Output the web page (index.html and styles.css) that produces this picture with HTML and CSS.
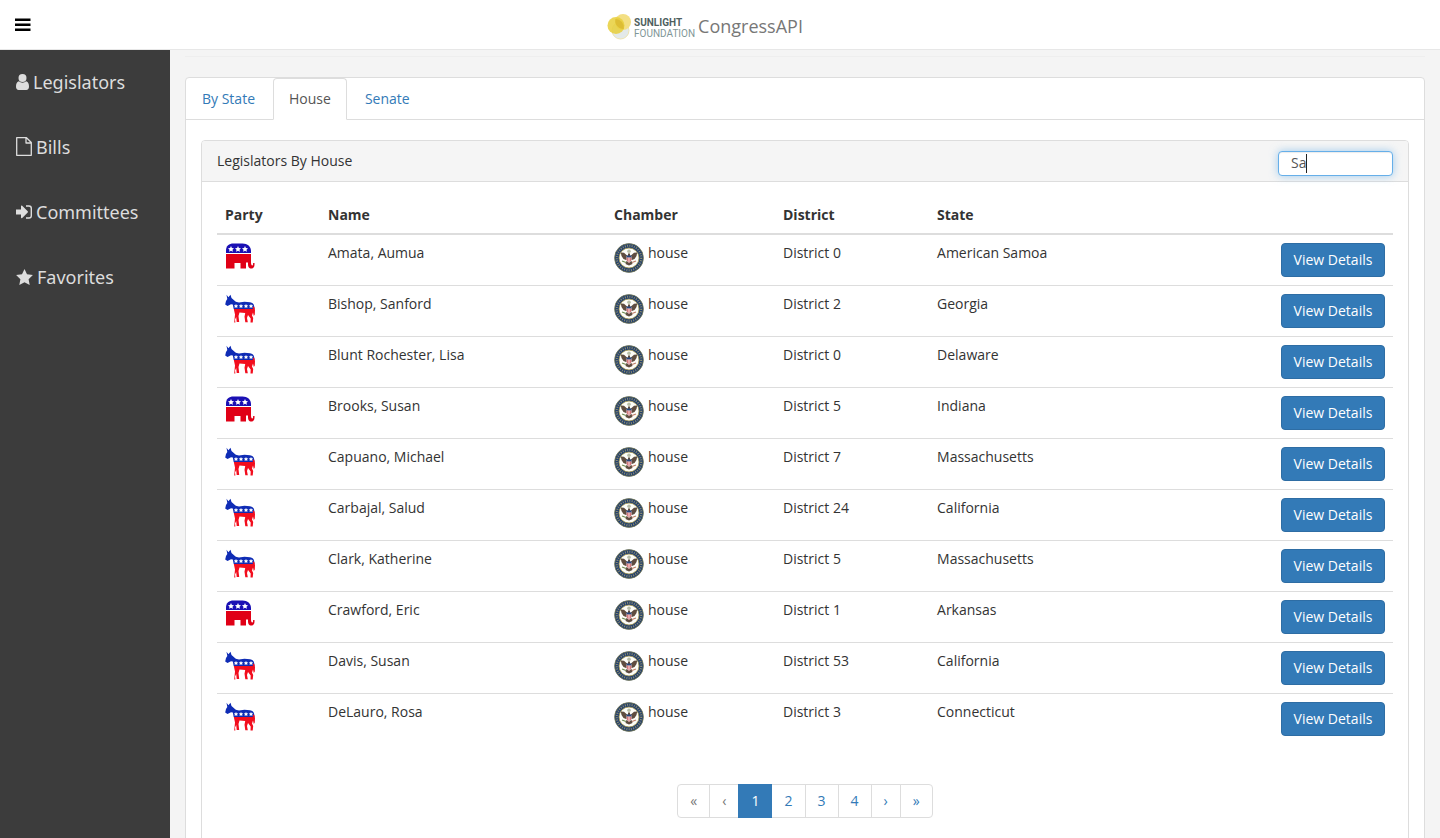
FILE: index.html
```html
<!DOCTYPE html>
<html lang="en">
<head>
<meta charset="utf-8">
<title>CongressAPI</title>
<link rel="stylesheet" href="styles.css">
</head>
<body>
<svg class="sprite" aria-hidden="true">
  <symbol id="elephant" viewBox="0 0 30 30">
    <path fill="#1a10b4" d="M1 10V7.500C1 3 4 .5 8.500 .5h9C22.500 .5 26 3.500 26 8v2z"/>
    <path fill="#e00016" d="M1 11h25v8.500c0 1.500.4 3 1.300 3 .8 0 .8-.8.8-2.500h1.400c.2 3.200-.5 5.500-3 5.500-2.800 0-3.500-2-3.500-4.500v-1.500h-2v6h-5.500V20H9.500v5.500H1z"/>
    <path fill="#fff" d="M6 3l.9 1.900 2.100.3-1.500 1.500.4 2.100L6 7.800l-1.900 1 .4-2.100L3 5.200l2.100-.3zM13 3l.9 1.900 2.100.3-1.500 1.500.4 2.100-1.900-1-1.900 1 .4-2.100L10 5.200l2.100-.3zM20 3l.9 1.900 2.100.3-1.500 1.500.4 2.100-1.900-1-1.900 1 .4-2.100L17 5.200l2.100-.3z"/>
  </symbol>
  <symbol id="donkey" viewBox="0 0 30 30">
    <path fill="#0f2cb5" d="M1.500 .8l1.900 2.500L5.500 .8 6.500 4l4.300 3.700L14 8.500l5.500-.8 5.500.5c2.500.3 4 1.800 4.200 4L29.500 15H8.700L7.800 10.500 6 10.300 2.500 12 .2 10.500 1 7 2.300 5z"/>
    <path fill="#f20d1d" d="M8.800 15h19l.2-2.500 1.300.5.7 3-.2 4.500-1 1.500-.8-3.500-1 3 1.200 2.500-.5 4.500h-2.200l.2-4-2.700-3.500-1 3 .8 4.300h-2.500l-.8-5.500.7-3.800-5.700-.5-1 3.500.7 6h-2.500l-.5-5-1.200 2.500.4 3H9.200l.8-8z"/>
    <path fill="#fff" d="M11 10l.7 1.300 1.500.2-1.100 1 .3 1.500-1.400-.7-1.400.7.3-1.500-1.100-1 1.500-.2zM16 10l.7 1.300 1.500.2-1.100 1 .3 1.500-1.400-.7-1.400.7.3-1.500-1.100-1 1.500-.2zM21 10l.7 1.300 1.500.2-1.100 1 .3 1.500-1.400-.7-1.400.7.3-1.500-1.100-1 1.500-.2zM26 10l.7 1.300 1.500.2-1.100 1 .3 1.500-1.400-.7-1.400.7.3-1.500-1.100-1 1.500-.2z"/>
  </symbol>
  <symbol id="seal" viewBox="0 0 30 30">
    <circle cx="15" cy="15" r="14.400" fill="#24406e" stroke="#77784f" stroke-width=".8"/>
    <circle cx="15" cy="15" r="12.200" fill="none" stroke="#8f8f6e" stroke-width="2" stroke-dasharray="1 1.300"/>
    <circle cx="15" cy="15" r="10" fill="#fdfdf8" stroke="#a99a4d" stroke-width=".8"/>
    <circle cx="15" cy="8.300" r="1.800" fill="#b9bfa8"/>
    <path fill="#5f4d40" d="M6.800 9.500l3.200.3 2.500 2.200 1.500 1v-2.500h2V13l1.500-1L20 9.800l3.200-.3-.7 3.500-2 3-2.500 1h-6l-2.500-1-2-3z"/>
    <path fill="#5f4d40" d="M12.500 18h5l1 3-3.500 1.500L11.500 21z"/>
    <path fill="#fff" d="M12.500 13h5v4.500L15 20l-2.500-2.500z"/>
    <path fill="#24467d" d="M12.500 12.500h5v2h-5z"/>
    <path stroke="#c64147" d="M13.300 14.500v3.500M15 14.500v5M16.700 14.500v3.500" stroke-width=".9"/>
    <path stroke="#6d8a50" stroke-width="1.200" d="M8 18l4 1.500"/>
    <path stroke="#c0806a" stroke-width="1.200" d="M22 18l-4 1.500"/>
  </symbol>
</svg>

<header class="topbar">
  <button class="menu-toggle" type="button" aria-label="Toggle menu">
    <svg width="16" height="14" viewBox="0 0 16 14"><path d="M0 .5h15.500v2.500H0zM0 5.500h15.500V8H0zM0 10.500h15.500V13H0z"/></svg>
  </button>
  <a class="brand" href="#">
    <svg class="brand-logo" width="88" height="28" viewBox="0 0 88 28" role="img" aria-label="Sunlight Foundation">
      <circle cx="13.500" cy="18.500" r="8.500" fill="#e3e9e9" stroke="#ece3b0"/>
      <circle cx="16" cy="10" r="8" fill="#f3df83"/>
      <circle cx="9" cy="13.500" r="8.500" fill="#e8cf3a" fill-opacity=".85"/>
      <path d="M8.500 7a8.500 8.500 0 0 1 8.300 9.900 8 8 0 0 1-8.300-9.900z" fill="#d8b52f" fill-opacity=".75"/>
      <text class="logo-strong" x="27" y="14">SUNLIGHT</text>
      <text class="logo-light" x="27" y="25">FOUNDATION</text>
    </svg>
    <span>CongressAPI</span>
  </a>
</header>

<div class="layout">
  <nav class="sidebar">
    <a href="#"><svg width="13" height="16" viewBox="0 0 13 16"><path fill="currentColor" d="M6.500 0a4 4 0 0 1 0 8 4 4 0 0 1 0-8zM2.800 7.300a5.500 5.500 0 0 0 7.400 0C12.300 7.800 13 10 13 12.700 13 14.600 12 16 10.300 16H2.700C1 16 0 14.600 0 12.700 0 10 .7 7.800 2.800 7.300z"/></svg>Legislators</a>
    <a href="#"><svg width="16" height="19" viewBox="0 0 16 19"><path fill="none" stroke="currentColor" stroke-width="1.300" stroke-linejoin="round" d="M.7 .7h9.800l4.800 4.800v12.800H.7zM10 .7v5.300h5.300"/></svg>Bills</a>
    <a href="#"><svg width="16" height="14" viewBox="0 0 16 14"><path fill="currentColor" d="M0 4.500h5V1.200c0-.8.700-1 1.200-.5l5.500 5.600c.4.400.4.800 0 1.200l-5.500 5.600c-.5.500-1.200.3-1.200-.5V9.500H0z"/><path fill="none" stroke="currentColor" stroke-width="1.400" d="M10 1h3c1.500 0 2.300.8 2.300 2.300v7.400c0 1.500-.8 2.300-2.300 2.300h-3"/></svg>Committees</a>
    <a href="#"><svg width="17" height="16" viewBox="0 0 17 16"><path fill="currentColor" d="M8.500 0L11 5.300l5.900.8-4.300 4.100 1.100 5.800-5.200-2.800L3.300 16l1.100-5.800L.1 6.100 6 5.300z"/></svg>Favorites</a>
  </nav>

  <main class="content">
    <hr class="divider">
    <section class="panel">
      <ul class="tabs">
        <li><a href="#">By State</a></li>
        <li><a class="active" href="#">House</a></li>
        <li><a href="#">Senate</a></li>
      </ul>
      <div class="tab-content">
        <section class="panel">
          <div class="panel-heading">
            <label for="search">Legislators By House</label>
            <div class="search-box"><input id="search" class="search" type="text" value="Sa"></div>
          </div>
          <div class="panel-body">
            <table class="table">
              <colgroup><col class="col-party"><col class="col-name"><col class="col-chamber"><col class="col-district"><col><col class="col-action"></colgroup>
              <thead>
                <tr><th>Party</th><th>Name</th><th>Chamber</th><th>District</th><th>State</th><th></th></tr>
              </thead>
              <tbody>
                <tr><td><svg class="badge"><use href="#elephant"/></svg></td><td>Amata, Aumua</td><td><div class="chamber"><svg class="badge"><use href="#seal"/></svg>house</div></td><td>District 0</td><td>American Samoa</td><td><button class="btn" type="button">View Details</button></td></tr>
                <tr><td><svg class="badge"><use href="#donkey"/></svg></td><td>Bishop, Sanford</td><td><div class="chamber"><svg class="badge"><use href="#seal"/></svg>house</div></td><td>District 2</td><td>Georgia</td><td><button class="btn" type="button">View Details</button></td></tr>
                <tr><td><svg class="badge"><use href="#donkey"/></svg></td><td>Blunt Rochester, Lisa</td><td><div class="chamber"><svg class="badge"><use href="#seal"/></svg>house</div></td><td>District 0</td><td>Delaware</td><td><button class="btn" type="button">View Details</button></td></tr>
                <tr><td><svg class="badge"><use href="#elephant"/></svg></td><td>Brooks, Susan</td><td><div class="chamber"><svg class="badge"><use href="#seal"/></svg>house</div></td><td>District 5</td><td>Indiana</td><td><button class="btn" type="button">View Details</button></td></tr>
                <tr><td><svg class="badge"><use href="#donkey"/></svg></td><td>Capuano, Michael</td><td><div class="chamber"><svg class="badge"><use href="#seal"/></svg>house</div></td><td>District 7</td><td>Massachusetts</td><td><button class="btn" type="button">View Details</button></td></tr>
                <tr><td><svg class="badge"><use href="#donkey"/></svg></td><td>Carbajal, Salud</td><td><div class="chamber"><svg class="badge"><use href="#seal"/></svg>house</div></td><td>District 24</td><td>California</td><td><button class="btn" type="button">View Details</button></td></tr>
                <tr><td><svg class="badge"><use href="#donkey"/></svg></td><td>Clark, Katherine</td><td><div class="chamber"><svg class="badge"><use href="#seal"/></svg>house</div></td><td>District 5</td><td>Massachusetts</td><td><button class="btn" type="button">View Details</button></td></tr>
                <tr><td><svg class="badge"><use href="#elephant"/></svg></td><td>Crawford, Eric</td><td><div class="chamber"><svg class="badge"><use href="#seal"/></svg>house</div></td><td>District 1</td><td>Arkansas</td><td><button class="btn" type="button">View Details</button></td></tr>
                <tr><td><svg class="badge"><use href="#donkey"/></svg></td><td>Davis, Susan</td><td><div class="chamber"><svg class="badge"><use href="#seal"/></svg>house</div></td><td>District 53</td><td>California</td><td><button class="btn" type="button">View Details</button></td></tr>
                <tr><td><svg class="badge"><use href="#donkey"/></svg></td><td>DeLauro, Rosa</td><td><div class="chamber"><svg class="badge"><use href="#seal"/></svg>house</div></td><td>District 3</td><td>Connecticut</td><td><button class="btn" type="button">View Details</button></td></tr>
              </tbody>
            </table>
            <nav class="pagination" aria-label="Pages">
              <a class="disabled" href="#">«</a>
              <a class="disabled" href="#">‹</a>
              <a class="current" href="#">1</a>
              <a href="#">2</a>
              <a href="#">3</a>
              <a href="#">4</a>
              <a href="#">›</a>
              <a href="#">»</a>
            </nav>
          </div>
        </section>
      </div>
    </section>
  </main>
</div>
</body>
</html>
```
FILE: styles.css
```css
* { box-sizing: border-box; }

body {
  margin: 0;
  height: 100vh;
  display: flex;
  flex-direction: column;
  overflow: hidden;
  background: #f4f4f4;
  color: #333;
  font: 14px/20px "Open Sans", sans-serif;
}

a { color: #337ab7; text-decoration: none; }

.sprite { display: none; }

.topbar {
  flex: none;
  display: flex;
  align-items: center;
  height: 50px;
  padding: 0 15px;
  background: #fff;
  border-bottom: 1px solid #e7e7e7;
}

.menu-toggle {
  display: flex;
  padding: 0;
  border: 0;
  background: none;
}

.brand {
  flex: 1;
  display: flex;
  align-items: center;
  justify-content: center;
  gap: 3px;
  padding: 2px 46px 0 0;
  color: #777;
  font-size: 18px;
}

.logo-strong, .logo-light {
  font-family: Roboto, sans-serif;
  font-size: 10px;
}
.logo-strong { font-weight: 700; fill: #4f5f5f; }
.logo-light { fill: #7f9797; }

.layout {
  flex: 1;
  display: flex;
  min-height: 0;
}

.sidebar {
  flex: none;
  width: 170px;
  background: #3c3c3c;
}
.sidebar a {
  display: flex;
  align-items: center;
  gap: 4px;
  height: 65px;
  padding: 0 16px 2px;
  color: #ddd;
  font: 18px/24px "Noto Sans", sans-serif;
}

.content {
  flex: 1;
  min-width: 0;
  padding: 6px 15px 0;
  overflow-y: auto;
  scrollbar-width: none;
}

.divider {
  margin: 0 0 20px;
  border: 0;
  border-top: 1px solid #eee;
}

.panel {
  background: #fff;
  border: 1px solid #ddd;
  border-radius: 4px;
}

.tabs {
  display: flex;
  gap: 2px;
  margin: 0;
  padding: 0;
  list-style: none;
  border-bottom: 1px solid #ddd;
}
.tabs li { margin-bottom: -1px; }
.tabs a {
  display: block;
  padding: 10px 15px;
  border: 1px solid transparent;
  border-radius: 4px 4px 0 0;
}
.tabs .active {
  color: #555;
  background: #fff;
  border-color: #ddd #ddd #fff;
}

.tab-content { padding: 20px 15px; }

.panel-heading {
  display: flex;
  align-items: flex-start;
  justify-content: space-between;
  height: 41px;
  padding: 10px 15px;
  background: #f5f5f5;
  border-bottom: 1px solid #ddd;
  border-radius: 3px 3px 0 0;
}

.search-box { position: relative; }

/* Text cursor at the end of the typed query */
.search-box::after {
  content: "";
  position: absolute;
  top: 3px;
  left: 28px;
  width: 1px;
  height: 19px;
  background: #222;
}

.search {
  display: block;
  width: 115px;
  height: 25px;
  padding: 0 12px 2px;
  border: 1px solid #66afe9;
  border-radius: 4px;
  outline: 0;
  background: #fff;
  box-shadow: inset 0 1px 1px rgba(0, 0, 0, .08), 0 0 8px rgba(102, 175, 233, .6);
  color: #555;
  font: inherit;
}
.search-box:focus-within::after { display: none; }

.panel-body { padding: 15px; }

.table {
  width: 100%;
  margin-bottom: 40px;
  table-layout: fixed;
  border-collapse: separate;
  border-spacing: 0;
}
.col-party { width: 8.76%; }
.col-name { width: 24.32%; }
.col-chamber { width: 14.37%; }
.col-district { width: 13.1%; }
.col-action { width: 120px; }
.table th, .table td {
  padding: 8px;
  text-align: left;
  vertical-align: top;
}
.table th { border-bottom: 2px solid #ddd; }
.table tr + tr td { border-top: 1px solid #ddd; }

.badge {
  display: block;
  width: 30px;
  height: 30px;
}
.chamber { display: flex; gap: 4px; }

.btn {
  display: block;
  width: 100%;
  height: 34px;
  padding: 0;
  border: 1px solid #2e6da4;
  border-radius: 4px;
  background: #337ab7;
  color: #fff;
  font: inherit;
}

.pagination {
  display: flex;
  justify-content: center;
  margin-bottom: 20px;
}
.pagination a {
  padding: 6px 12px;
  border: 1px solid #ddd;
  background: #fff;
}
.pagination a + a { margin-left: -1px; }
.pagination a:first-child { border-radius: 4px 0 0 4px; }
.pagination a:last-child { border-radius: 0 4px 4px 0; }
.pagination .disabled { color: #777; }
.pagination .current {
  z-index: 1;
  border-color: #337ab7;
  background: #337ab7;
  color: #fff;
}
```
